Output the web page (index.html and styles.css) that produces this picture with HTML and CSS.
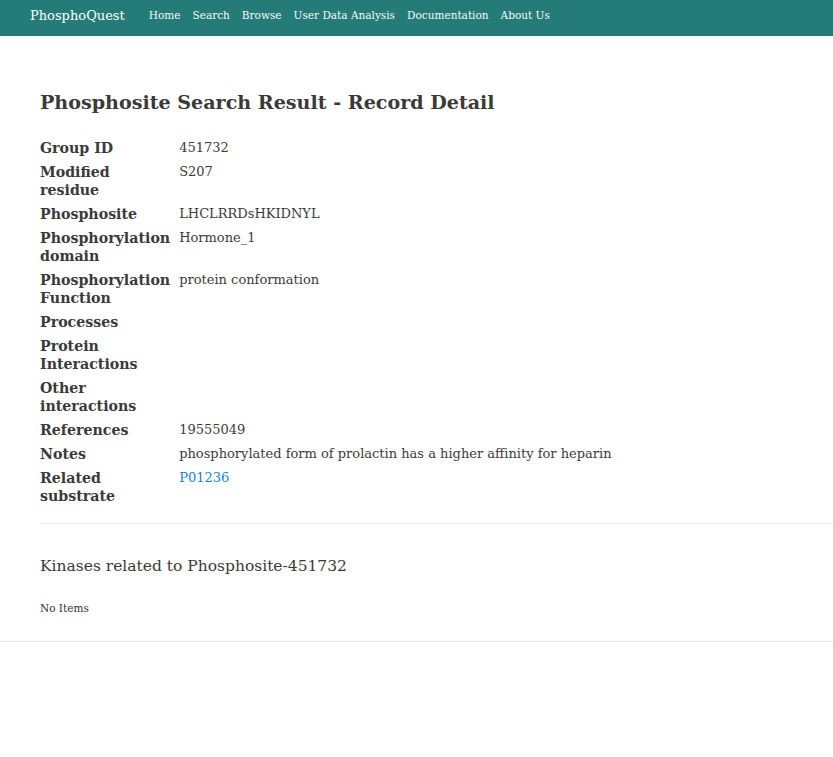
FILE: index.html
```html
<!DOCTYPE html>
<html>
<head>
<meta charset="utf-8">
<link rel="stylesheet" href="styles.css">
</head>
<body>
<nav class="navbar">
  <a class="brand" href="#">PhosphoQuest</a>
  <ul class="nav-links">
    <li><a href="#">Home</a></li>
    <li><a href="#">Search</a></li>
    <li><a href="#">Browse</a></li>
    <li><a href="#">User Data Analysis</a></li>
    <li><a href="#">Documentation</a></li>
    <li><a href="#">About Us</a></li>
  </ul>
</nav>
<main class="content">
  <h1 class="page-title">Phosphosite Search Result - Record Detail</h1>
  <table class="detail">
    <tr><th>Group ID</th><td>451732</td></tr>
    <tr><th>Modified<br>residue</th><td>S207</td></tr>
    <tr><th>Phosphosite</th><td>LHCLRRDsHKIDNYL</td></tr>
    <tr><th>Phosphorylation<br>domain</th><td>Hormone_1</td></tr>
    <tr><th>Phosphorylation<br>Function</th><td>protein conformation</td></tr>
    <tr><th>Processes</th><td></td></tr>
    <tr><th>Protein<br>Interactions</th><td></td></tr>
    <tr><th>Other<br>interactions</th><td></td></tr>
    <tr><th>References</th><td>19555049</td></tr>
    <tr><th>Notes</th><td>phosphorylated form of prolactin has a higher affinity for heparin</td></tr>
    <tr><th>Related<br>substrate</th><td><a class="link" href="#">P01236</a></td></tr>
  </table>
  <hr class="divider">
  <h2 class="section-title">Kinases related to Phosphosite-451732</h2>
  <p class="empty">No Items</p>
</main>
<hr class="footer-rule">
</body>
</html>
```
FILE: styles.css
```css
html, body {
  margin: 0;
  padding: 0;
  background: #ffffff;
  font-family: "DejaVu Serif", "Liberation Serif", serif;
  color: #3b3b3b;
}
.navbar {
  background: #247b78;
  height: 36px;
  display: flex;
  align-items: center;
  padding-left: 30px;
}
.brand {
  color: #ffffff;
  text-decoration: none;
  font-size: 13px;
  margin-right: 24px;
  padding-bottom: 5px;
}
.nav-links {
  list-style: none;
  margin: 0;
  padding: 0;
  display: flex;
  gap: 12px;
}
.nav-links a {
  color: #f4fbf8;
  text-decoration: none;
  font-size: 11.7px;
  font-family: "DejaVu Serif Condensed", "DejaVu Serif", serif;
  font-stretch: condensed;
  display: block;
  padding-bottom: 6px;
}
.content {
  padding: 0 0 0 40px;
}
.page-title {
  margin: 55px 0 0 0;
  font-size: 19.1px;
  line-height: 24px;
  font-weight: bold;
  color: #3a3a3a;
}
.detail {
  border-collapse: collapse;
  margin-top: 24px;
}
.detail th {
  text-align: left;
  vertical-align: top;
  font-weight: bold;
  font-size: 14.2px;
  padding: 0 9px 6px 0;
  line-height: 18px;
  color: #3a3a3a;
}
.detail td {
  vertical-align: top;
  font-size: 13px;
  padding: 0 0 6px 0;
  line-height: 18px;
  color: #3b3b3b;
}
.link {
  color: #1a7fe0;
  text-decoration: none;
}
.divider {
  border: 0;
  border-top: 1px solid #e8e8e8;
  margin: 12px 0 0 0;
}
.section-title {
  font-weight: normal;
  font-size: 15.5px;
  margin: 31px 0 0 0;
  line-height: 22px;
  color: #3a3a3a;
}
.empty {
  font-size: 10.5px;
  margin: 24px 0 0 0;
  line-height: 14px;
  color: #333;
}
.footer-rule {
  border: 0;
  border-top: 1px solid #e8e8e8;
  margin: 26px 0 0 0;
}
```
